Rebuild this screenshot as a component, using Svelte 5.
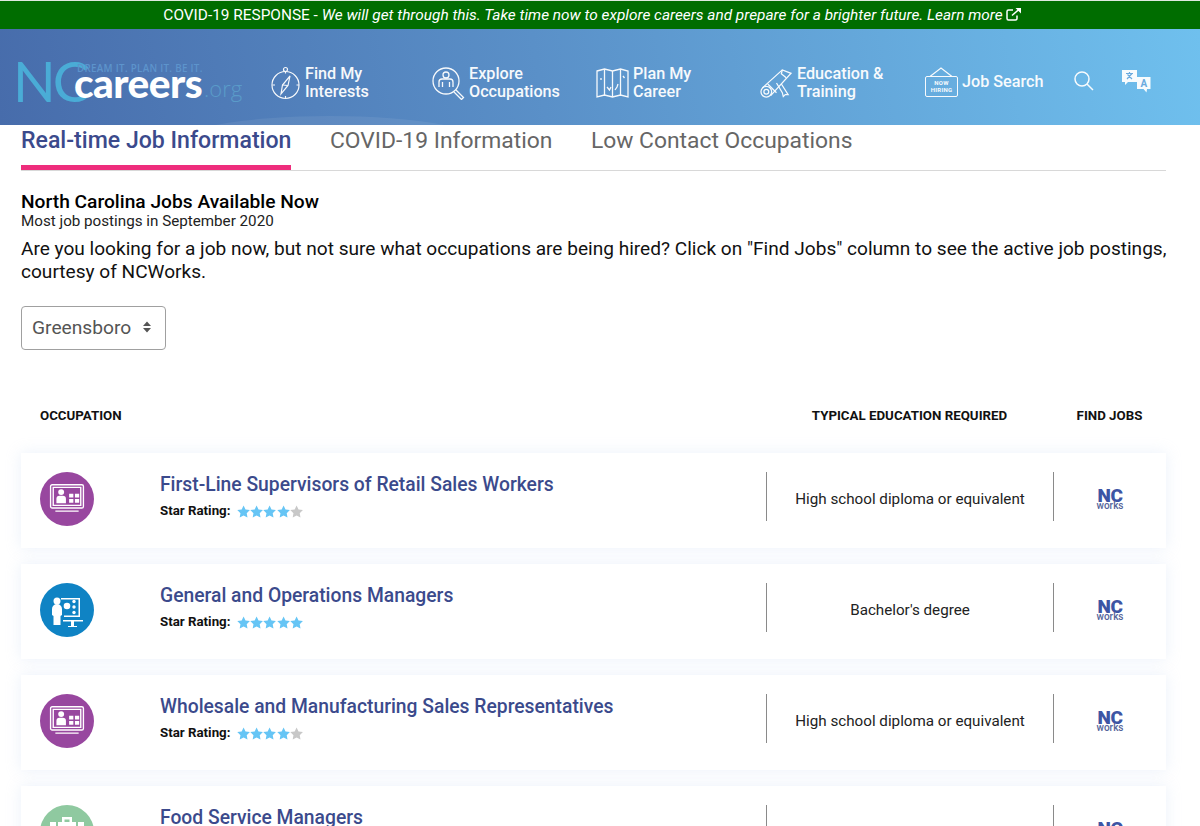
<script>
  const tabs = ['Real-time Job Information', 'COVID-19 Information', 'Low Contact Occupations'];

  const jobs = [
    { title: 'First-Line Supervisors of Retail Sales Workers', stars: 4, education: 'High school diploma or equivalent', kind: 'sales' },
    { title: 'General and Operations Managers', stars: 5, education: "Bachelor's degree", kind: 'manage' },
    { title: 'Wholesale and Manufacturing Sales Representatives', stars: 4, education: 'High school diploma or equivalent', kind: 'sales' },
    { title: 'Food Service Managers', stars: 4, education: 'High school diploma or equivalent', kind: 'food' }
  ];
</script>

<div class="page">
  <div class="banner">
    <span>COVID-19 RESPONSE - <em>We will get through this. Take time now to explore careers and prepare for a brighter future. Learn more</em></span>
    <svg class="ext" width="16" height="14" viewBox="0 0 16 14" fill="none" stroke="#fff" stroke-width="1.5">
      <path d="M7 3H2.500A1.500 1.500 0 0 0 1 4.500v7A1.500 1.500 0 0 0 2.500 13h7a1.500 1.500 0 0 0 1.500-1.500V8.500" />
      <path d="M6 8.500 14 1.500" />
      <path d="M9.500 1h5.500v5.500z" fill="#fff" stroke="none" />
    </svg>
  </div>

  <header class="header">
    <div class="wave"></div>
    <div class="logo">
      <span class="logo-nc">NC</span>
      <span class="logo-tag">DREAM IT. PLAN IT. BE IT.</span>
      <span class="logo-careers">careers</span>
      <span class="logo-org">.org</span>
    </div>
    <nav class="nav">
      <div class="item">
        <svg width="31" height="34" viewBox="0 0 30 34" fill="none" stroke="#fff" stroke-width="1.200">
          <circle cx="15" cy="19" r="13.500" />
          <circle cx="15" cy="3.500" r="2" />
          <path d="M19.500 10 12 19l-1.500 9 7-8.500z" />
          <path d="M12 19l5.500 .5" />
          <path d="M15 5.500v2M15 30v2M2 19h2.500M26 19h2.500" />
        </svg>
        <span>Find My<br />Interests</span>
      </div>
      <div class="item">
        <svg width="33" height="34" viewBox="0 0 33 34" fill="none" stroke="#fff" stroke-width="1.300">
          <circle cx="14" cy="15" r="13" />
          <circle cx="14" cy="9" r="3" />
          <path d="M7 21v-5a3 3 0 0 1 3-3h8a3 3 0 0 1 3 3v5M10.500 21v-5M17.500 21v-5" />
          <path d="M24 24l7.500 7.500-2 2L22 26" />
        </svg>
        <span>Explore<br />Occupations</span>
      </div>
      <div class="item">
        <svg width="33" height="30" viewBox="0 0 33 30" fill="none" stroke="#fff" stroke-width="1.300">
          <path d="M1 3l7.500-2 8 2 8-2 7.500 2v26l-7.500-2-8 2-8-2L1 29z" />
          <path d="M8.500 1v26M16.500 3v26M24.500 1v26" />
          <path d="M5 10v2M11 19l2.500 3 1.500-3M19 22l2-3 1-3M27 8l1.500 2" />
        </svg>
        <span>Plan My<br />Career</span>
      </div>
      <div class="item">
        <svg width="33" height="32" viewBox="0 0 34 32" fill="none" stroke="#fff" stroke-width="1.300">
          <circle cx="6.500" cy="25" r="5.500" />
          <circle cx="6.500" cy="25" r="2.500" />
          <path d="M2.500 21 23 2.500 32 6 11 29" />
          <path d="M8 17l9 9M17 16l6 10 1 4 2-2 3 0-7-11" />
          <path d="M23 2.500l-1 4 5 4" />
        </svg>
        <span>Education &amp;<br />Training</span>
      </div>
      <div class="item">
        <div class="hiring">
          <svg class="hook" width="24" height="10" viewBox="0 0 24 10" fill="none" stroke="#fff" stroke-width="1.200"><path d="M1 9.500 12 1l11 8.500" /></svg>
          <span>NOW<br />HIRING</span>
        </div>
        <span class="job-search">Job Search</span>
      </div>
      <div class="item tool">
        <svg width="20" height="20" viewBox="0 0 20 20" fill="none" stroke="#fff" stroke-width="1.500">
          <circle cx="8" cy="8" r="7" />
          <path d="M13 13l6 6" />
        </svg>
      </div>
      <div class="item tool">
        <svg width="30" height="24" viewBox="0 0 30 24">
          <path d="M1 1h15v12H7l-3 3v-3H1z" fill="#fff" />
          <path d="M5 4.500h7M8.500 3v1.500M6 10l5-5.500M6.500 5.500 11 10" stroke="#6aaade" stroke-width="1.200" fill="none" />
          <path d="M16 8h13.500v12H26l-.5 3.500-3-3.500H16z" fill="#fff" />
          <text x="22.800" y="18" class="xa">A</text>
        </svg>
      </div>
    </nav>
  </header>

  <div class="tabs">
    {#each tabs as tab, i}
      <div class="tab" class:active={i === 0}>{tab}</div>
    {/each}
  </div>

  <h2>North Carolina Jobs Available Now</h2>
  <div class="sub">Most job postings in September 2020</div>
  <p>Are you looking for a job now, but not sure what occupations are being hired? Click on "Find Jobs" column to see the active job postings, courtesy of NCWorks.</p>

  <div class="select">
    <span>Greensboro</span>
    <svg width="10" height="14" viewBox="0 0 10 14" fill="#555"><path d="M5 1.500 9 6H1zM5 12.500 1 8h8z" /></svg>
  </div>

  <div class="row-grid thead">
    <div class="th-occ">OCCUPATION</div>
    <div class="center">TYPICAL EDUCATION REQUIRED</div>
    <div class="center">FIND JOBS</div>
  </div>

  {#each jobs as job}
    <div class="row-grid card">
      <div class="icon {job.kind}">
        {#if job.kind === 'sales'}
          <svg width="36" height="36" viewBox="0 0 34 34" fill="none" stroke="#fff" stroke-width="1.300">
            <rect x="1.500" y="3.500" width="31" height="22" rx="1.500" />
            <path d="M4 6h26v17H4zM6 28.500h22" />
            <circle cx="11.500" cy="10.500" r="2.800" fill="#fff" stroke="none" />
            <path d="M7 21v-4a3 3 0 0 1 3-3h3a3 3 0 0 1 3 3v4z" fill="#fff" stroke="none" />
            <path d="M19 12h4v3.500h-4zM24.500 12h4v3.500h-4zM19 17h4v3.500h-4zM24.500 17h4v3.500h-4z" fill="#fff" stroke="none" />
          </svg>
        {:else if job.kind === 'manage'}
          <svg width="40" height="40" viewBox="0 0 40 40" fill="#fff">
            <circle cx="10" cy="11" r="3.500" />
            <path d="M5 19a5 5 0 0 1 10 0v6l-1.500 1v9h-7v-9L5 25z" />
            <path d="M14 8h19v19H17v-1.500h14.500v-16H14z" />
            <circle cx="20" cy="16" r="3.300" />
            <circle cx="27" cy="11.500" r="1.700" />
            <circle cx="27" cy="17" r="1.700" />
            <circle cx="27" cy="22.500" r="1.700" />
            <path d="M16 30h20v1.500H27V36h3v1H21v-1h3v-4.500h-8z" />
          </svg>
        {:else}
          <svg width="40" height="40" viewBox="0 0 40 40" fill="#fff">
            <path d="M15 5h10v5h-2.500V7.500h-5V10H15z" />
            <rect x="3" y="10" width="6" height="20" />
            <rect x="11" y="10" width="18" height="20" />
            <rect x="31" y="10" width="6" height="20" />
          </svg>
        {/if}
      </div>
      <div class="info">
        <a href="#top" class="title">{job.title}</a>
        <div class="rating">
          <b>Star Rating:</b>
          <span class="stars">
            {#each [1, 2, 3, 4, 5] as n}
              <svg class="star" viewBox="0 0 24 24" fill={n <= job.stars ? '#66c5f5' : '#c8c8c8'}>
                <path d="M12 .8l3.500 7.300 8 1.100-5.800 5.600 1.400 8L12 19l-7.100 3.800 1.400-8L.5 9.200l8-1.100z" />
              </svg>
            {/each}
          </span>
        </div>
      </div>
      <div class="cell">{job.education}</div>
      <div class="cell">
        <div class="ncworks"><span class="nw-nc">NC</span><span class="nw-w">works</span></div>
      </div>
    </div>
  {/each}
</div>

<style>
  :global(body) {
    overflow: hidden;
    background: #fff;
  }

  .page {
    height: 826px;
    overflow: hidden;
    font-family: Roboto, "Liberation Sans", sans-serif;
    color: #111;
  }

  .banner {
    height: 29px;
    box-sizing: border-box;
    background: #006d00;
    border-top: 1px solid #dfe9df;
    padding-right: 15px;
    color: #fff;
    font-size: 15.400px;
    display: flex;
    align-items: center;
    justify-content: center;
    gap: 3px;
  }

  .ext {
    margin-top: -3px;
  }

  .header {
    position: relative;
    height: 96px;
    display: flex;
    align-items: center;
    background: linear-gradient(80deg, #476cab 0%, #5a90c8 45%, #6fc0ee 100%);
    overflow: hidden;
  }

  .wave {
    position: absolute;
    left: 170px;
    top: 87px;
    width: 320px;
    height: 60px;
    border-radius: 50%;
    background: rgba(255, 255, 255, 0.07);
  }

  .logo {
    position: relative;
    width: 270px;
    height: 96px;
    flex: none;
    font-family: "Open Sans", sans-serif;
  }

  .logo span {
    position: absolute;
    white-space: nowrap;
  }

  .logo-nc {
    left: 13px;
    top: 22px;
    font-family: Lato, sans-serif;
    font-size: 56px;
    line-height: 60px;
    font-weight: 400;
    color: #4aacd6;
    letter-spacing: -3px;
  }

  .logo-tag {
    left: 77px;
    top: 34px;
    font-size: 9.800px;
    line-height: 12px;
    font-weight: 600;
    letter-spacing: 0.3px;
    color: #5d94cc;
  }

  .logo-careers {
    left: 74px;
    top: 31px;
    font-family: Lato, sans-serif;
    font-size: 40.500px;
    line-height: 46px;
    font-weight: 900;
    color: #fff;
    letter-spacing: -0.5px;
  }

  .logo-org {
    left: 204px;
    top: 44px;
    font-size: 22px;
    line-height: 30px;
    font-weight: 300;
    color: #5a9bc9;
  }

  .nav {
    display: grid;
    grid-template-columns: 162px 164px 164px 165px 149px 47px 40px;
    align-items: center;
    box-sizing: border-box;
    padding-top: 12px;
    height: 100%;
  }

  .item {
    display: flex;
    align-items: center;
    gap: 4px;
    color: #fff;
    font-size: 16.200px;
    font-weight: 500;
    line-height: 18px;
    opacity: 0.95;
  }

  .item svg {
    flex: none;
  }

  .tool {
    margin-top: -4px;
  }

  .job-search {
    margin-top: -2px;
  }

  .xa {
    font-family: Roboto, sans-serif;
    font-size: 10px;
    font-weight: 700;
    fill: #6aaade;
    text-anchor: middle;
  }

  .hiring {
    position: relative;
    box-sizing: border-box;
    width: 33px;
    height: 21px;
    margin-top: 6px;
    border: 1.500px solid #fff;
    border-radius: 2px;
    display: flex;
    align-items: center;
    justify-content: center;
    font-size: 6px;
    line-height: 7px;
    font-weight: 700;
    text-align: center;
    letter-spacing: 0.3px;
  }

  .hook {
    position: absolute;
    left: 3px;
    top: -10px;
  }

  .tabs {
    display: flex;
    gap: 38.500px;
    margin: 0 34px 0 21px;
    height: 46px;
    box-sizing: border-box;
    border-bottom: 1px solid #d8d8d8;
  }

  .tab {
    height: 45px;
    box-sizing: border-box;
    padding-top: 2px;
    font-size: 22.850px;
    line-height: 27px;
    color: #666;
  }

  .tab.active {
    font-size: 23.100px;
    color: #3b4a8c;
    font-weight: 500;
    border-bottom: 5px solid #ee2d7c;
  }

  h2 {
    margin: 20px 0 0 21px;
    font-size: 19.200px;
    line-height: 22px;
    font-weight: 500;
    color: #000;
  }

  .sub {
    margin-left: 21px;
    font-size: 15.200px;
    line-height: 16px;
    color: #222;
  }

  p {
    margin: 8px 30px 0 21px;
    font-size: 19.080px;
    line-height: 23px;
    color: #111;
  }

  .select {
    margin: 23px 0 0 21px;
    width: 145px;
    height: 44px;
    box-sizing: border-box;
    border: 1px solid #a0a0a0;
    border-radius: 4px;
    display: flex;
    align-items: center;
    justify-content: space-between;
    padding: 0 13px 2px 10px;
    font-size: 19.200px;
    color: #555;
  }

  .row-grid {
    display: grid;
    grid-template-columns: 139px 606px 287px 113px;
    margin-left: 21px;
    width: 1145px;
    align-items: center;
  }

  .thead {
    height: 30px;
    margin-top: 50px;
    margin-bottom: 23px;
    font-size: 13.300px;
    font-weight: 700;
    color: #111;
  }

  .th-occ {
    grid-column: 1 / 3;
    padding-left: 19px;
  }

  .center {
    text-align: center;
  }

  .card {
    height: 95px;
    margin-bottom: 16px;
    background: #fff;
    box-shadow: 0 0 14px rgba(190, 210, 240, 0.3);
  }

  .icon {
    width: 54px;
    height: 54px;
    margin: 19px 0 0 19px;
    align-self: start;
    border-radius: 50%;
    display: flex;
    align-items: center;
    justify-content: center;
  }

  .icon.sales {
    background: #98479f;
  }

  .icon.manage {
    background: #0f83c4;
  }

  .icon.food {
    background: #8fc9a0;
  }

  .info {
    align-self: start;
    padding-top: 20px;
  }

  .title {
    display: block;
    font-size: 19.300px;
    line-height: 24px;
    font-weight: 500;
    color: #3b4a8c;
    text-decoration: none;
  }

  .rating {
    display: flex;
    align-items: center;
    margin-top: 7px;
    font-size: 13.300px;
    line-height: 14px;
  }

  .rating b {
    font-weight: 700;
    width: 77px;
  }

  .stars {
    display: flex;
    height: 13px;
  }

  .star {
    width: 13.200px;
    height: 13.200px;
  }

  .cell {
    align-self: start;
    margin-top: 19px;
    height: 49px;
    box-sizing: border-box;
    padding-top: 4px;
    border-left: 1px solid #8a8a8a;
    display: flex;
    align-items: center;
    justify-content: center;
    font-size: 15.200px;
    color: #222;
  }

  .ncworks {
    display: flex;
    flex-direction: column;
    align-items: center;
    color: #3d55a4;
    line-height: 1;
  }

  .nw-nc {
    font-size: 19px;
    line-height: 13px;
    font-weight: 900;
    letter-spacing: -0.5px;
  }

  .nw-w {
    font-size: 10px;
    line-height: 7px;
    font-weight: 500;
    color: #55649a;
  }
</style>
